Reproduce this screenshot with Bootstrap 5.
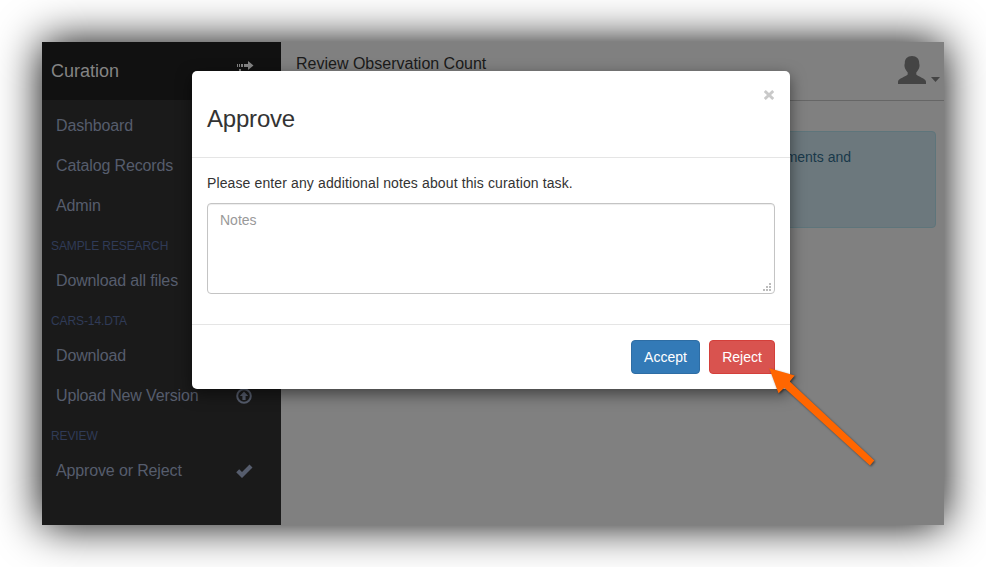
<!DOCTYPE html>
<html lang="en">
<head>
<meta charset="utf-8">
<meta name="viewport" content="width=device-width, initial-scale=1">
<title>Curation</title>
<link href="https://cdn.jsdelivr.net/npm/bootstrap@5.3.0/dist/css/bootstrap.min.css" rel="stylesheet">
<style>
body{font-family:"Liberation Sans",Arial,sans-serif;font-size:14px;line-height:20px;background:#fff;height:567px;overflow:hidden;padding:42px}
.app-window{width:902px;height:483px;background:#808080;box-shadow:0 0 42px #000}
.side-panel{width:239px;background:#1a1a1a;font-size:16px;color:#565d6d}
.side-brand{height:58px;background:#111;color:#848484;font-size:18px;padding:0 27px 0 9px}
.side-panel .nav{padding-top:5px}
.side-panel .nav-link{height:40px;padding:2px 28px 0 14px;color:#565d6d;letter-spacing:-.14px}
.side-panel .nav-link svg{margin-top:-2px}
.side-title{height:35px;padding:5px 0 0 9px;line-height:33px;font-size:12px;letter-spacing:-.1px;color:#303b57}
.top-bar{height:59px;border-bottom:1px solid #666;padding:11px 4px 0 15px;font-size:16px;color:#1a1a1a}
.top-bar .page-name{padding-top:1px}
.caret-down{width:9px;height:5px;background:#444;clip-path:polygon(0 0,100% 0,50% 100%);margin-top:24px}
.task-note{margin:30px 8px 0 15px;height:97px;background:#6c787d;border:1px solid #5e757b;border-radius:4px;color:#19384a;padding:15px 84px}
.approve-dialog{left:192px;top:71px;width:598px;height:318px}
.approve-dialog .modal-content{height:318px;background:#fff;border:0;border-radius:5px;color:#333;box-shadow:0 5px 15px rgba(0,0,0,.5)}
.approve-dialog .modal-header{height:87px;padding:15px;border-bottom:1px solid #e5e5e5}
.approve-dialog .modal-title{font-size:24px;line-height:26px;margin-top:20px;font-weight:400;letter-spacing:-.2px}
.close-mark{width:10px;height:10px;margin:4px 1px 0 0}
.approve-dialog .modal-body{padding:15px}
.notes-label{letter-spacing:.12px}
.approve-dialog textarea{height:91px;margin-top:10px;padding:6px 12px;font-size:14px;line-height:20px;border:1px solid #c4c4c4;border-radius:4px;box-shadow:inset 0 1px 1px rgba(0,0,0,.075);resize:none}
.approve-dialog textarea::placeholder{color:#999;opacity:1}
.grip{right:3px;bottom:2px}
.approve-dialog .modal-footer{height:65px;padding:15px;gap:9px;border-top:1px solid #e5e5e5}
.approve-dialog .modal-footer>*{margin:0}
.approve-dialog .btn{height:34px;font-size:14px;line-height:20px;padding:6px 12px;border-radius:4px;color:#fff}
.btn-accept{width:69px;background:#337ab7;border-color:#2e6da4}
.btn-reject{width:66px;background:#d9534f;border-color:#d43f3a}
.pointer-arrow{left:760px;top:360px}
</style>
<script src="https://cdn.jsdelivr.net/npm/bootstrap@5.3.0/dist/js/bootstrap.bundle.min.js"></script>
</head>
<body>
<div class="app-window d-flex">
  <aside class="side-panel d-flex flex-column flex-shrink-0">
    <div class="side-brand d-flex align-items-center justify-content-between">
      <span>Curation</span>
      <svg width="18" height="12" viewBox="0 0 18 12" fill="#858585" class="mb-2"><path d="M1 3h1v3H1zM3 3h1v3H3zM5 3h2v3H5zM8 3h4V0l5.500 4.500L12 9V6H8zM3 8h2v3H3z"/></svg>
    </div>
    <nav class="nav flex-column flex-nowrap">
      <a class="nav-link d-flex align-items-center">Dashboard</a>
      <a class="nav-link d-flex align-items-center">Catalog Records</a>
      <a class="nav-link d-flex align-items-center">Admin</a>
      <div class="side-title">SAMPLE RESEARCH</div>
      <a class="nav-link d-flex align-items-center">Download all files</a>
      <div class="side-title">CARS-14.DTA</div>
      <a class="nav-link d-flex align-items-center">Download</a>
      <a class="nav-link d-flex align-items-center justify-content-between">Upload New Version
        <svg width="18" height="18" viewBox="0 0 18 18" fill="#565d6d"><circle cx="9" cy="10" r="6.8" fill="none" stroke="#565d6d" stroke-width="2"/><path d="M9 5.400 13.200 10H10.600v4H7.400v-4H4.800z"/></svg>
      </a>
      <div class="side-title">REVIEW</div>
      <a class="nav-link d-flex align-items-center justify-content-between">Approve or Reject
        <svg width="18" height="18" viewBox="0 0 18 18" fill="#565d6d"><path d="M1.200 11.200 4.200 8.200 7 10.900 14.500 3.500 17.500 6.500 7 17z"/></svg>
      </a>
    </nav>
  </aside>
  <main class="flex-grow-1">
    <header class="top-bar d-flex justify-content-between">
      <span class="page-name">Review Observation Count</span>
      <div class="d-flex">
        <svg width="28" height="28" viewBox="0 0 28 28" fill="#444" class="mt-1 me-1" overflow="visible"><path transform="translate(-1 -1)" d="M14 0c4.700 0 7.200 3 7.200 7 0 1 .5 1.500.3 3.200-.3 3-2 4.500-3.200 6.200v2.200c1.500 2 9.700 4 9.700 7.200V28H0v-2.200c0-3.200 8.200-5.200 9.700-7.200v-2.200C8.500 14.700 6.800 13.200 6.500 10.200 6.300 8.500 6.800 8 6.800 7c0-4 2.500-7 7.200-7z"/></svg>
        <span class="caret-down"></span>
      </div>
    </header>
    <div class="task-note text-end">ments and</div>
  </main>
</div>

<div class="approve-dialog position-absolute">
  <div class="modal-content">
    <div class="modal-header d-flex align-items-start justify-content-between">
      <h4 class="modal-title">Approve</h4>
      <svg class="close-mark" viewBox="0 0 10 10" stroke="#c9c9c9" stroke-width="2.800"><path d="M.8 1 9.200 9M9.200 1 .8 9"/></svg>
    </div>
    <div class="modal-body">
      <div class="notes-label">Please enter any additional notes about this curation task.</div>
      <div class="position-relative">
        <textarea class="form-control" placeholder="Notes"></textarea>
        <svg class="grip position-absolute" width="9" height="9" fill="#bcbcbc"><path d="M6 0h2v2H6zM3 3h2v2H3zM6 3h2v2H6zM0 6h2v2H0zM3 6h2v2H3zM6 6h2v2H6z"/></svg>
      </div>
    </div>
    <div class="modal-footer">
      <button type="button" class="btn btn-accept">Accept</button>
      <button type="button" class="btn btn-reject">Reject</button>
    </div>
  </div>
</div>

<svg class="pointer-arrow position-absolute" width="125" height="115" viewBox="760 360 125 115"><path d="M769.300 368.300 794.700 375.600 789.700 381.500 874.300 460.500 870 465.500 784.300 387.700 778.500 393.300z" fill="#ff6600" style="filter:drop-shadow(1px 1px 1px rgba(0,0,0,.5))"/></svg>
</body>
</html>
